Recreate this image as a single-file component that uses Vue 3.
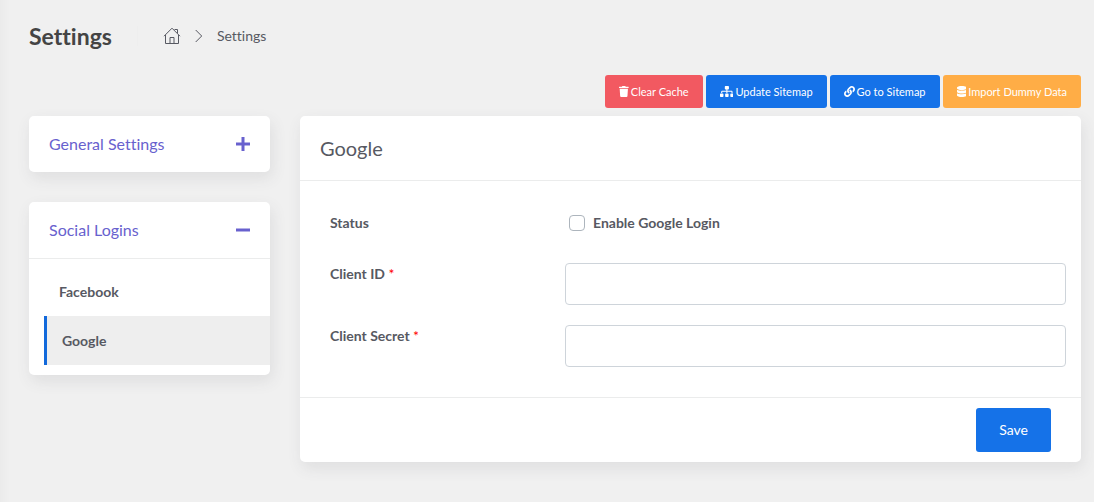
<script setup>
import { ref } from 'vue'

const actions = [
  {
    label: 'Clear Cache',
    tone: 'danger',
    width: 448,
    path: 'M432 32H312l-9.4-18.7A24 24 0 0 0 281.1 0H166.8a23.72 23.72 0 0 0-21.4 13.3L136 32H16A16 16 0 0 0 0 48v32a16 16 0 0 0 16 16h416a16 16 0 0 0 16-16V48a16 16 0 0 0-16-16zM32 128l21.2 339a48 48 0 0 0 47.9 45h245.8a48 48 0 0 0 47.9-45L416 128z'
  },
  {
    label: 'Update Sitemap',
    tone: 'primary',
    width: 640,
    path: 'M128 352H32c-17.67 0-32 14.33-32 32v96c0 17.67 14.33 32 32 32h96c17.67 0 32-14.33 32-32v-96c0-17.67-14.33-32-32-32zm-24-80h192v48h48v-48h192v48h48v-57.59c0-21.17-17.23-38.41-38.41-38.41H344v-64h40c17.67 0 32-14.33 32-32V32c0-17.67-14.33-32-32-32H256c-17.67 0-32 14.33-32 32v96c0 17.67 14.33 32 32 32h40v64H94.41C73.23 224 56 241.23 56 262.41V320h48v-48zm264 80h-96c-17.67 0-32 14.33-32 32v96c0 17.67 14.33 32 32 32h96c17.67 0 32-14.33 32-32v-96c0-17.67-14.33-32-32-32zm240 0h-96c-17.67 0-32 14.33-32 32v96c0 17.67 14.33 32 32 32h96c17.67 0 32-14.33 32-32v-96c0-17.67-14.33-32-32-32z'
  },
  {
    label: 'Go to Sitemap',
    tone: 'primary',
    width: 512,
    path: 'M326.612 185.391c59.747 59.809 58.927 155.698.36 214.59-.11.12-.24.25-.36.37l-67.2 67.2c-59.27 59.27-155.699 59.262-214.96 0-59.27-59.26-59.27-155.7 0-214.96l37.106-37.106c9.84-9.84 26.786-3.3 27.294 10.606.648 17.722 3.826 35.527 9.69 52.721 1.986 5.822.567 12.262-3.783 16.612l-13.087 13.087c-28.026 28.026-28.905 73.66-1.155 101.96 28.024 28.579 74.086 28.749 102.325.51l67.2-67.19c28.191-28.191 28.073-73.757 0-101.83-3.701-3.694-7.429-6.564-10.341-8.569a16.037 16.037 0 0 1-6.947-12.606c-.396-10.567 3.348-21.456 11.698-29.806l21.054-21.055c5.521-5.521 14.182-6.199 20.584-1.731a152.482 152.482 0 0 1 20.522 17.197zM467.547 44.449c-59.261-59.262-155.69-59.27-214.96 0l-67.2 67.2c-.12.12-.25.25-.36.37-58.566 58.892-59.387 154.781.36 214.59a152.454 152.454 0 0 0 20.521 17.196c6.402 4.468 15.064 3.789 20.584-1.731l21.054-21.055c8.35-8.35 12.094-19.239 11.698-29.806a16.037 16.037 0 0 0-6.947-12.606c-2.912-2.005-6.64-4.875-10.341-8.569-28.073-28.073-28.191-73.639 0-101.83l67.2-67.19c28.239-28.239 74.3-28.069 102.325.51 27.75 28.3 26.872 73.934-1.155 101.96l-13.087 13.087c-4.35 4.35-5.769 10.79-3.783 16.612 5.864 17.194 9.042 34.999 9.69 52.721.509 13.906 17.454 20.446 27.294 10.606l37.106-37.106c59.271-59.259 59.271-155.699.001-214.959z'
  },
  {
    label: 'Import Dummy Data',
    tone: 'warning',
    width: 448,
    path: 'M448 73.143v45.714C448 159.143 347.667 192 224 192S0 159.143 0 118.857V73.143C0 32.857 100.333 0 224 0s224 32.857 224 73.143zM448 176v102.857C448 319.143 347.667 352 224 352S0 319.143 0 278.857V176c48.125 33.143 136.208 48.572 224 48.572S399.874 209.143 448 176zm0 160v102.857C448 479.143 347.667 512 224 512S0 479.143 0 438.857V336c48.125 33.143 136.208 48.572 224 48.572S399.874 369.143 448 336z'
  }
]

const enabled = ref(false)
const clientId = ref('')
const clientSecret = ref('')
const generalOpen = ref(false)
const socialOpen = ref(true)
</script>

<template>
  <div class="page">
    <header class="page-header">
      <h1>Settings</h1>
      <nav class="crumbs" aria-label="Breadcrumb">
        <a href="#" aria-label="Home">
          <svg class="home" viewBox="0 0 18 18" aria-hidden="true">
            <path d="M1 9.2 9 1.2l8 8M2.5 8v8.5h13V8M7 16.500V10.500h4v6M11.500 2.500h3v3.800" />
          </svg>
        </a>
        <svg class="chevron" viewBox="0 0 8 14" aria-hidden="true">
          <path d="M.7 1 6.700 7 .7 13" />
        </svg>
        <a href="#">Settings</a>
      </nav>
    </header>

    <div class="actions">
      <button v-for="a in actions" :key="a.label" type="button" class="action" :class="a.tone">
        <svg :viewBox="`0 0 ${a.width} 512`" aria-hidden="true"><path :d="a.path" /></svg>
        <span>{{ a.label }}</span>
      </button>
    </div>

    <div class="columns">
      <aside class="side">
        <section class="card">
          <button type="button" class="toggle" :aria-expanded="generalOpen" @click="generalOpen = !generalOpen">
            <span>General Settings</span>
            <svg viewBox="0 0 14 14" aria-hidden="true">
              <path d="M0 7h14" />
              <path v-if="!generalOpen" d="M7 0v14" />
            </svg>
          </button>
        </section>
        <section class="card">
          <button type="button" class="toggle" :aria-expanded="socialOpen" @click="socialOpen = !socialOpen">
            <span>Social Logins</span>
            <svg viewBox="0 0 14 14" aria-hidden="true">
              <path d="M0 7h14" />
              <path v-if="!socialOpen" d="M7 0v14" />
            </svg>
          </button>
          <nav v-if="socialOpen" class="menu" aria-label="Social logins">
            <a href="#">Facebook</a>
            <a href="#" class="active" aria-current="page">Google</a>
          </nav>
        </section>
      </aside>

      <form class="card" @submit.prevent>
        <h2>Google</h2>
        <div class="fields">
          <div class="row">
            <span id="status-label" class="label">Status</span>
            <div class="check" role="group" aria-labelledby="status-label">
              <input id="enabled" v-model="enabled" type="checkbox">
              <label for="enabled">Enable Google Login</label>
            </div>
          </div>
          <div class="row">
            <label class="label" for="client-id">Client ID <span class="required">*</span></label>
            <input id="client-id" v-model="clientId" class="text" type="text">
          </div>
          <div class="row">
            <label class="label" for="client-secret">Client Secret <span class="required">*</span></label>
            <input id="client-secret" v-model="clientSecret" class="text" type="text">
          </div>
        </div>
        <footer>
          <button type="submit" class="save">Save</button>
        </footer>
      </form>
    </div>
  </div>
</template>

<style>
body {
  margin: 0;
  background: #f0f0f0;
}
</style>

<style scoped>
.page {
  box-sizing: border-box;
  min-height: 100vh;
  padding: 20px 13px 40px 29px;
  background: linear-gradient(to right, #ebebeb, #f0f0f0 10px);
  color: #575962;
  font: 14px/20px Lato, "Liberation Sans", sans-serif;
  font-variant-ligatures: none;
}
a {
  color: inherit;
  text-decoration: none;
}
button,
input {
  font: inherit;
  font-variant-ligatures: none;
}
button {
  border: 0;
  cursor: pointer;
}
.page-header {
  display: flex;
  align-items: center;
  height: 32px;
  margin-bottom: 23px;
}
h1 {
  margin: 0;
  color: #444;
  font-size: 23px;
  font-weight: 700;
  line-height: 30px;
}
.crumbs {
  display: flex;
  align-items: center;
  margin-left: 25px;
  padding-left: 25px;
  border-left: 1px solid #eee;
}
.crumbs a {
  display: flex;
}
.home {
  width: 18px;
  height: 18px;
}
.chevron {
  width: 8px;
  height: 14px;
  margin: 0 14px;
}
.home path,
.chevron path {
  fill: none;
  stroke: #575962;
  stroke-width: 1;
}
.actions {
  display: flex;
  justify-content: flex-end;
  gap: 3px;
  margin-bottom: 8px;
}
.action {
  display: flex;
  align-items: center;
  gap: 2px;
  height: 33px;
  padding: 0 14px;
  border-radius: 3px;
  color: #fff;
  font-size: 11px;
}
.action svg {
  height: 11px;
  fill: #fff;
}
.danger {
  background: #f25961;
}
.primary {
  background: #1572e8;
}
.warning {
  background: #ffad46;
}
.columns {
  display: grid;
  grid-template-columns: minmax(0, 241fr) minmax(0, 781fr);
  align-items: start;
  gap: 30px;
}
.side {
  display: grid;
  gap: 30px;
}
.card {
  border-radius: 5px;
  background: #fff;
  box-shadow: 2px 6px 15px rgba(69, 65, 78, 0.1);
}
.toggle {
  display: flex;
  align-items: center;
  justify-content: space-between;
  width: 100%;
  height: 56px;
  padding: 0 20px;
  background: transparent;
  color: #6861ce;
  font-size: 16px;
}
.toggle svg {
  width: 14px;
  height: 14px;
}
.toggle path {
  stroke: #6861ce;
  stroke-width: 3;
}
.menu {
  padding: 8px 0 10px 15px;
  border-top: 1px solid #ebecec;
}
.menu a {
  display: block;
  padding: 14px 15px;
  font-weight: 700;
  line-height: 21px;
}
.menu .active {
  border-left: 3px solid #1269db;
  background: #eee;
}
h2 {
  margin: 0;
  padding: 16px 20px;
  border-bottom: 1px solid #ebecec;
  font-size: 20px;
  font-weight: 400;
  line-height: 32px;
}
.fields {
  display: grid;
  gap: 20px;
  padding: 31px 15px 30px 30px;
}
.row {
  display: grid;
  grid-template-columns: minmax(0, 235fr) minmax(0, 501fr);
}
.label {
  font-weight: 700;
  line-height: 21px;
}
.required {
  color: #f00;
  font-weight: 400;
}
.check {
  display: flex;
  align-items: center;
  gap: 8px;
  height: 22px;
  margin-bottom: 9px;
  padding-left: 4px;
  font-weight: 700;
}
.check input {
  appearance: none;
  box-sizing: border-box;
  width: 16px;
  height: 16px;
  margin: 0;
  border: 1px solid #adb5bd;
  border-radius: 4px;
}
.check input:checked {
  background: #1572e8;
}
.text {
  box-sizing: border-box;
  width: 100%;
  height: 42px;
  padding: 8px 16px;
  border: 1px solid #ced4da;
  border-radius: 4px;
}
footer {
  display: flex;
  justify-content: flex-end;
  padding: 10px 30px;
  border-top: 1px solid #ebecec;
}
.save {
  height: 44px;
  padding: 0 23px;
  border-radius: 3px;
  background: #1572e8;
  color: #fff;
}
</style>
